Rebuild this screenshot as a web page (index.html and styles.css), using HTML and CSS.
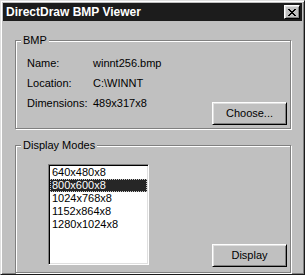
FILE: index.html
```html
<!DOCTYPE html>
<html>
<head>
<meta charset="utf-8">
<link rel="stylesheet" href="styles.css">
</head>
<body>
<div class="window">
  <div class="titlebar">
    <span class="title">DirectDraw BMP Viewer</span>
    <button class="close" aria-label="Close">
      <svg width="8" height="7" viewBox="0 0 8 7" shape-rendering="crispEdges"><path fill="#000" d="M0 0h2v1h-2z M6 0h2v1h-2z M1 1h2v1h-2z M5 1h2v1h-2z M2 2h4v1h-4z M3 3h2v1h-2z M2 4h4v1h-4z M1 5h2v1h-2z M5 5h2v1h-2z M0 6h2v1h-2z M6 6h2v1h-2z"/></svg>
    </button>
  </div>
  <div class="client">
    <div class="group">
      <span class="group-label">BMP</span>
      <div class="group-body body-bmp">
        <div class="info">
          <span>Name:</span><span>winnt256.bmp</span>
          <span>Location:</span><span>C:\WINNT</span>
          <span>Dimensions:</span><span>489x317x8</span>
        </div>
        <button class="btn">Choose...</button>
      </div>
    </div>
    <div class="group group-modes">
      <span class="group-label">Display Modes</span>
      <div class="group-body body-modes">
        <ul class="listbox">
          <li>640x480x8</li>
          <li class="selected">800x600x8</li>
          <li>1024x768x8</li>
          <li>1152x864x8</li>
          <li>1280x1024x8</li>
        </ul>
        <button class="btn">Display</button>
      </div>
    </div>
  </div>
</div>
</body>
</html>
```
FILE: styles.css
```css
html, body {
  margin: 0;
  padding: 0;
}
body {
  width: 305px;
  height: 275px;
  overflow: hidden;
  background: #c0c0c0;
  font: 11px/13px "Liberation Sans", Arial, sans-serif;
  color: #000;
}
.window {
  box-sizing: border-box;
  width: 305px;
  height: 275px;
  border: 1px solid;
  border-color: #dfdfdf #1a1a1a #1a1a1a #dfdfdf;
  box-shadow: inset 1px 1px #fff, inset -1px -1px #808080;
  padding: 2px;
  background: #c0c0c0;
  display: flex;
  flex-direction: column;
}
.titlebar {
  height: 18px;
  flex: none;
  background: #1c1c1c;
  display: flex;
  align-items: center;
  justify-content: space-between;
  padding: 0 2px 0 3px;
}
.title {
  color: #fff;
  font-weight: bold;
  font-size: 12px;
  line-height: 14px;
}
.close {
  box-sizing: border-box;
  width: 16px;
  height: 14px;
  padding: 0;
  margin: 0;
  background: #c0c0c0;
  border: 1px solid;
  border-color: #fff #000 #000 #fff;
  box-shadow: inset 1px 1px #dfdfdf, inset -1px -1px #808080;
  display: flex;
  align-items: center;
  justify-content: center;
}
.close svg {
  display: block;
  margin-top: 0;
}
.client {
  padding: 19px 11px 0 12px;
}
.group {
  border: 1px solid #808080;
  box-shadow: inset 1px 1px #fff, 1px 1px #fff;
}
.group-modes {
  margin-top: 16px;
}
.group-label {
  display: inline-block;
  vertical-align: top;
  margin: -7px 0 0 5px;
  padding: 0 2px;
  background: #c0c0c0;
  line-height: 13px;
}
.group-body {
  display: flex;
  justify-content: space-between;
  align-items: flex-end;
}
.body-bmp {
  padding: 3px 3px 3px 11px;
}
.info {
  align-self: flex-start;
  display: grid;
  grid-template-columns: 66px auto;
  row-gap: 7px;
  margin-bottom: 15px;
}
.body-modes {
  padding: 5px 3px 5px 32px;
}
.btn {
  box-sizing: border-box;
  width: 75px;
  height: 23px;
  margin: 0;
  padding: 0;
  font: 11px/13px "Liberation Sans", Arial, sans-serif;
  color: #000;
  background: #c0c0c0;
  border: 1px solid;
  border-color: #fff #000 #000 #fff;
  box-shadow: inset 1px 1px #dfdfdf, inset -1px -1px #808080;
}
.listbox {
  align-self: flex-start;
  box-sizing: border-box;
  width: 101px;
  height: 101px;
  margin: 0 0 2px 0;
  padding: 1px;
  list-style: none;
  background: #fff;
  border: 1px solid;
  border-color: #808080 #fff #fff #808080;
  box-shadow: inset 1px 1px #000, inset -1px -1px #dfdfdf;
}
.listbox li {
  height: 13px;
  padding-left: 2px;
  white-space: nowrap;
}
.listbox li.selected {
  background: #262626;
  color: #fff;
  outline: 1px dotted #c8c8c8;
  outline-offset: -1px;
}
```
